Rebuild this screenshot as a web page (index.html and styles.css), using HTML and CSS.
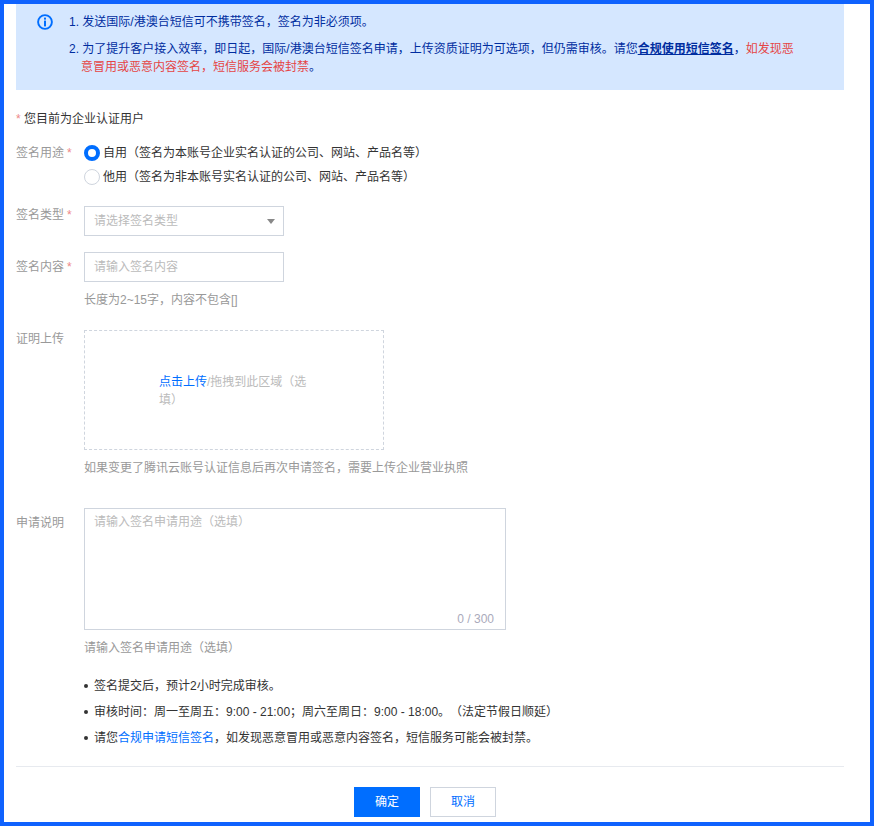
FILE: index.html
```html
<!DOCTYPE html>
<html lang="zh-CN">
<head>
<meta charset="utf-8">
<title>签名申请</title>
<link rel="stylesheet" href="styles.css">
</head>
<body>
<div class="frame">
  <div class="notice">
    <svg class="notice-icon" width="16" height="16" viewBox="0 0 16 16" aria-hidden="true">
      <circle cx="8" cy="8" r="6.9" fill="none" stroke="#006eff" stroke-width="1.9"/>
      <rect x="7" y="3.6" width="2" height="2" fill="#006eff"/>
      <rect x="7" y="6.6" width="2" height="5.8" fill="#006eff"/>
    </svg>
    <ol class="notice-list">
      <li>发送国际/港澳台短信可不携带签名，签名为非必须项。</li>
      <li>为了提升客户接入效率，即日起，国际/港澳台短信签名申请，上传资质证明为可选项，但仍需审核。请您<a class="notice-link" href="#">合规使用短信签名</a>，<span class="danger">如发现恶意冒用或恶意内容签名，短信服务会被封禁</span>。</li>
    </ol>
  </div>

  <p class="auth"><span class="star">*</span> 您目前为企业认证用户</p>

  <div class="row row-use">
    <div class="label">签名用途<span class="star">*</span></div>
    <div class="control radios">
      <div class="radio"><span class="dot dot-on"></span>自用（签名为本账号企业实名认证的公司、网站、产品名等）</div>
      <div class="radio"><span class="dot"></span>他用（签名为非本账号实名认证的公司、网站、产品名等）</div>
    </div>
  </div>

  <div class="row row-type">
    <div class="label">签名类型<span class="star">*</span></div>
    <div class="control">
      <div class="field select">请选择签名类型<span class="caret"></span></div>
    </div>
  </div>

  <div class="row row-content">
    <div class="label">签名内容<span class="star">*</span></div>
    <div class="control">
      <div class="field">请输入签名内容</div>
      <p class="help help-content">长度为2~15字，内容不包含[]</p>
    </div>
  </div>

  <div class="row row-upload">
    <div class="label">证明上传</div>
    <div class="control">
      <div class="dragger">
        <p class="dragger-text"><a class="link" href="#">点击上传</a>/拖拽到此区域（选填）</p>
      </div>
      <p class="help help-upload">如果变更了腾讯云账号认证信息后再次申请签名，需要上传企业营业执照</p>
    </div>
  </div>

  <div class="row row-desc">
    <div class="label">申请说明</div>
    <div class="control">
      <div class="textarea">
        <span>请输入签名申请用途（选填）</span>
        <span class="count">0 / 300</span>
      </div>
      <p class="help help-desc">请输入签名申请用途（选填）</p>
      <ul class="tips">
        <li>签名提交后，预计2小时完成审核。</li>
        <li>审核时间：周一至周五：9:00 - 21:00；周六至周日：9:00 - 18:00。（法定节假日顺延）</li>
        <li>请您<a class="link" href="#">合规申请短信签名</a>，如发现恶意冒用或恶意内容签名，短信服务可能会被封禁。</li>
      </ul>
    </div>
  </div>

  <div class="footer">
    <button class="btn btn-primary" type="button">确定</button>
    <button class="btn" type="button">取消</button>
  </div>
</div>
</body>
</html>
```

FILE: styles.css
```css
* { box-sizing: border-box; }
html, body { margin: 0; padding: 0; }
body {
  background: #fff;
  color: #333;
  font: 12px/18px "Liberation Sans", "Noto Sans CJK SC", sans-serif;
  text-spacing-trim: space-all;
}
p { margin: 0; }
a { text-decoration: none; }
.frame {
  width: 874px;
  height: 826px;
  border: 4px solid #0f62fe;
  padding: 0 26px 0 12px;
  overflow: hidden;
}
.notice {
  display: flex;
  height: 86px;
  background: #d5e7ff;
  color: #002da0;
  padding: 9px 0 0 21px;
}
.notice-icon { flex: none; margin-top: 1px; }
.notice-list {
  margin: 0;
  padding: 0 44px 0 16px;
  list-style-position: inside;
  flex: 1;
}
.notice-list li { margin-bottom: 9px; }
.notice-list li:last-child { margin-bottom: 0; padding-left: 12px; text-indent: -12px; }
.notice-link { color: #002da0; font-weight: 700; text-decoration: underline; }
.danger { color: #e54545; }
.star { color: #e88; }
.auth { margin-top: 20px; color: #333; }
.row { display: flex; }
.label {
  width: 68px;
  flex: none;
  color: #999;
}
.label .star { margin-left: 3px; }
.control { flex: 1; min-width: 0; }
.row-use { margin-top: 16px; }
.radio { display: flex; align-items: center; height: 24px; color: #333; }
.dot {
  width: 16px;
  height: 16px;
  border-radius: 50%;
  border: 1px solid #cfd5de;
  margin: 0 3px 0 0;
  flex: none;
  background: #fff;
}
.dot-on { border: 4px solid #006eff; }
.radios { margin-top: -3px; }
.row-type { margin-top: 17px; }
.row-content { margin-top: 16px; }
.row-content .label { padding-top: 6px; }
.field {
  width: 200px;
  height: 30px;
  border: 1px solid #cfd5de;
  padding: 0 9px 0 10px;
  line-height: 28px;
  color: #bbb;
  text-indent: -1px;
}
.select { position: relative; }
.caret {
  position: absolute;
  right: 8px;
  top: 12px;
  border-left: 4px solid transparent;
  border-right: 4px solid transparent;
  border-top: 5px solid #888;
}
.help { color: #999; }
.help-content { margin-top: 9px; }
.row-upload { margin-top: 21px; }
.dragger {
  width: 300px;
  height: 120px;
  border: 1px dashed #cfd5de;
  padding-top: 2px;
  display: flex;
  align-items: center;
  justify-content: center;
  color: #bbb;
}
.dragger-text { width: 150px; }
.link { color: #006eff; }
.help-upload { margin-top: 9px; }
.row-desc { margin-top: 31px; }
.row-desc .label { padding-top: 6px; }
.textarea {
  position: relative;
  width: 422px;
  height: 122px;
  border: 1px solid #cfd5de;
  padding: 4px 9px;
  color: #bbb;
}
.count {
  position: absolute;
  right: 11px;
  bottom: 1px;
  color: #aab;
}
.help-desc { margin-top: 9px; }
.tips {
  list-style: none;
  margin: 20px 0 0;
  padding: 0;
  color: #333;
}
.tips li {
  position: relative;
  padding-left: 10px;
  margin-bottom: 8px;
}
.tips li::before {
  content: "";
  position: absolute;
  left: 0;
  top: 7px;
  width: 4px;
  height: 4px;
  border-radius: 50%;
  background: #333;
}
.footer {
  border-top: 1px solid #e7eaef;
  margin-top: 11px;
  padding: 20px 10px 0 0;
  display: flex;
  justify-content: center;
  gap: 10px;
}
.btn {
  width: 66px;
  height: 30px;
  border: 1px solid #cfd5de;
  background: #fff;
  color: #006eff;
  font: inherit;
  padding: 0;
}
.btn-primary {
  background: #006eff;
  border-color: #006eff;
  color: #fff;
}
```
